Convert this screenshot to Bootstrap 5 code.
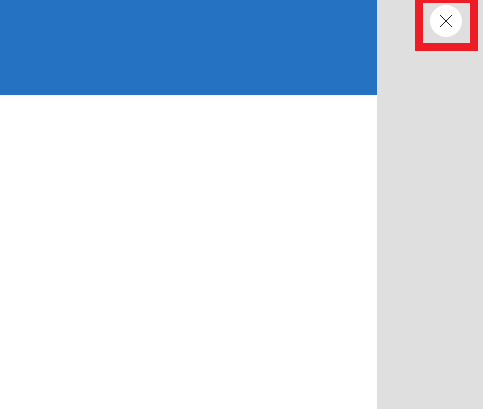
<!DOCTYPE html>
<html lang="en">
<head>
<meta charset="utf-8">
<title>Panel</title>
<link rel="stylesheet" href="https://cdn.jsdelivr.net/npm/bootstrap@5.3.0/dist/css/bootstrap.min.css">
<style>
html, body { height: 100%; }
body { background: #fff; overflow: hidden; }
.shell { height: 409px; }
.main-pane { width: 377px; }
.blue-bar { height: 95px; background: #2572c2; }
.side-pane { width: 106px; background: #dfdfdf; padding: 0 5px 0 38px; }
.close-box { width: 63px; height: 51px; border: solid #ee1c25; border-width: 3px 8px 8px; padding: 2px 8px 0 7px; }
.close-btn { width: 32px; height: 32px; background: #fff; border: 0; padding: 0; }
</style>
</head>
<body>
<div class="shell d-flex">
  <div class="main-pane bg-white"><div class="blue-bar"></div></div>
  <div class="side-pane">
    <div class="close-box">
      <button type="button" class="close-btn rounded-circle d-flex align-items-center justify-content-center" aria-label="Close">
        <svg width="12" height="12" viewBox="0 0 12 12"><path d="M0 0 12 12M12 0 0 12" stroke="#222" stroke-width="1" fill="none"/></svg>
      </button>
    </div>
  </div>
</div>
<script src="https://cdn.jsdelivr.net/npm/bootstrap@5.3.0/dist/js/bootstrap.bundle.min.js"></script>
</body>
</html>
